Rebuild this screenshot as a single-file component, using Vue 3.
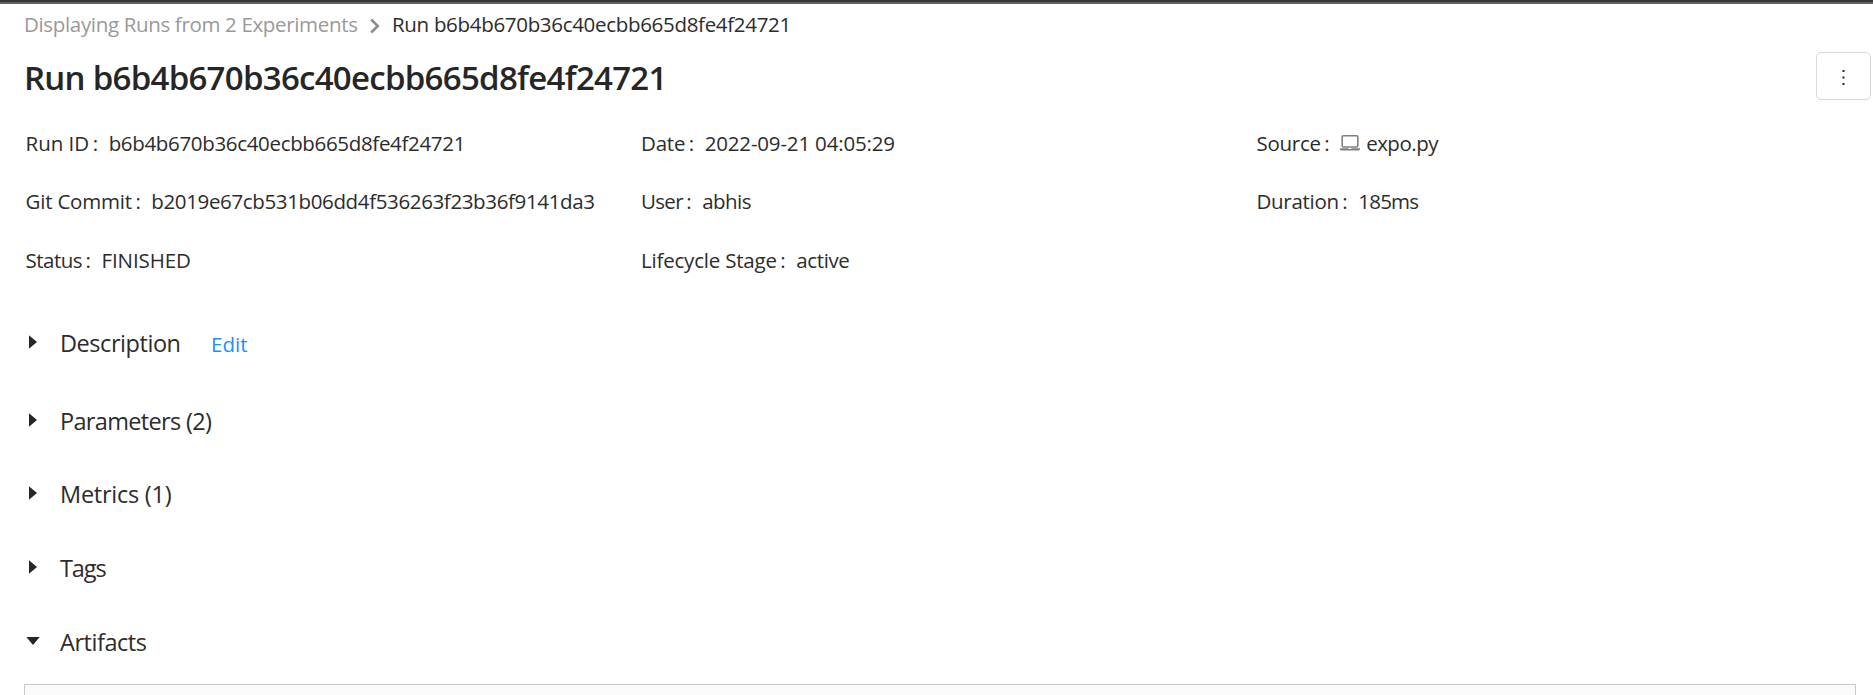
<script setup>
const runId = 'b6b4b670b36c40ecbb665d8fe4f24721'

const details = [
  { label: 'Run ID', labelTrack: 0, value: runId, track: -0.33 },
  { label: 'Date', labelTrack: -0.2, value: '2022-09-21 04:05:29', track: -0.17 },
  { label: 'Source', labelTrack: -0.27, value: 'expo.py', track: -0.5, icon: true },
  { label: 'Git Commit', labelTrack: -0.2, value: 'b2019e67cb531b06dd4f536263f23b36f9141da3', track: -0.36 },
  { label: 'User', labelTrack: -0.7, value: 'abhis', track: -0.55 },
  { label: 'Duration', labelTrack: -0.29, value: '185ms', track: -0.75 },
  { label: 'Status', labelTrack: -0.5, value: 'FINISHED', track: -0.1 },
  { label: 'Lifecycle Stage', labelTrack: -0.2, value: 'active', track: -0.35 },
]

const sections = [
  { title: 'Description', track: -0.45, edit: true },
  { title: 'Parameters (2)', track: -0.67 },
  { title: 'Metrics (1)', track: -0.25 },
  { title: 'Tags', track: -1.1 },
  { title: 'Artifacts', track: -0.45, open: true },
]
</script>

<template>
  <div class="page">
    <div class="topbar"></div>
    <nav class="breadcrumb">
      <a class="crumb-link">Displaying Runs from 2 Experiments</a>
      <svg class="chevron" width="10" height="16" viewBox="0 0 10 16">
        <path d="M1.2 1.5 L7.8 8 L1.2 14.5" fill="none" stroke="#8c8c8c" stroke-width="2.5" />
      </svg>
      <span class="crumb-current">Run {{ runId }}</span>
    </nav>
    <header class="header">
      <h1>Run {{ runId }}</h1>
      <button class="menu" aria-label="More">
        <svg width="3" height="16" viewBox="0 0 3 16">
          <path d="M.5 1h2v2h-2zM.5 7.5h2v2h-2zM.5 14h2v2h-2z" fill="#262626" />
        </svg>
      </button>
    </header>
    <dl class="details">
      <div v-for="d in details" :key="d.label" class="detail">
        <dt><span :style="{ letterSpacing: d.labelTrack + 'px' }">{{ d.label }}</span><span class="colon">:</span></dt>
        <dd>
          <svg v-if="d.icon" class="laptop" width="20" height="16" viewBox="0 0 20 16">
            <rect x="2.2" y=".8" width="15.6" height="11.2" rx="1" fill="none" stroke="#808080" stroke-width="1.6" />
            <path d="M0 13.3h8.2q.2.8.8.8h2q.6 0 .8-.8H20v.7q0 1.6-1.6 1.6H1.6Q0 15.6 0 14z" fill="#808080" />
          </svg>
          <span :style="{ letterSpacing: d.track + 'px' }">{{ d.value }}</span>
        </dd>
      </div>
    </dl>
    <section v-for="s in sections" :key="s.title" class="section" :class="{ described: s.edit }">
      <span class="caret">
        <svg v-if="s.open" width="14" height="8" viewBox="0 0 14 8"><path d="M.3 0h13.4L7 8z" fill="#262626" /></svg>
        <svg v-else width="8" height="14" viewBox="0 0 8 14"><path d="M0 .3v13.4L8 7z" fill="#262626" /></svg>
      </span>
      <h2 :style="{ letterSpacing: s.track + 'px' }">{{ s.title }}</h2>
      <a v-if="s.edit" class="edit">Edit</a>
    </section>
    <div class="artifacts"></div>
  </div>
</template>

<style>
html, body { margin: 0; overflow: hidden; background: #fff; }
</style>

<style scoped>
.page {
  box-sizing: border-box;
  height: 695px;
  overflow: hidden;
  font-family: "Open Sans", "Noto Sans", sans-serif;
  font-size: 20.5px;
  font-weight: 400;
  line-height: 30px;
  color: #2c2c2c;
  white-space: nowrap;
}
.topbar { height: 2px; background: #35363a; border-bottom: 2px solid #5f6063; }
.breadcrumb { display: flex; height: 30px; margin: 5px 0 0 24px; }
.crumb-link { width: 345.5px; letter-spacing: -0.34px; color: #999; }
.chevron { margin-top: 9px; }
.crumb-current { margin-left: 12.5px; letter-spacing: -0.31px; }
.header { display: flex; justify-content: space-between; height: 48px; margin: 13px 2px 0 24px; }
h1 { margin: 2px 0 0; font-size: 33px; font-weight: 600; line-height: 48px; letter-spacing: -0.72px; color: #262626; }
.menu {
  display: flex;
  align-items: center;
  justify-content: center;
  box-sizing: border-box;
  width: 55px;
  height: 48px;
  padding: 2px 0 0;
  border: 1px solid #d9d9d9;
  border-radius: 5px;
  background: #fff;
  box-shadow: 0 2px 0 rgba(0, 0, 0, .015);
}
.details { display: grid; grid-template-columns: repeat(3, 615.5px); row-gap: 28.4px; margin: 28px 0 48px 25.5px; }
.detail { display: flex; }
dd { display: flex; margin: 0; }
.colon { margin: 0 10.5px 0 3.5px; }
.laptop { margin: 7px 6px 0 0; }
.section { display: flex; height: 40px; margin: 0 0 33.6px 24px; line-height: 40px; }
.section.described { margin-bottom: 38px; }
.caret { display: flex; align-items: center; justify-content: center; width: 18px; height: 38px; }
h2 { margin: 0 0 0 18px; font-size: 23.5px; font-weight: 400; line-height: 40px; }
.edit { margin: 1px 0 0 30.5px; color: #1890ff; }
.artifacts { box-sizing: border-box; width: 1832px; height: 40px; margin: -11.2px 0 0 24px; border: 1px solid #c8c8c8; background: #fafafa; }
</style>
